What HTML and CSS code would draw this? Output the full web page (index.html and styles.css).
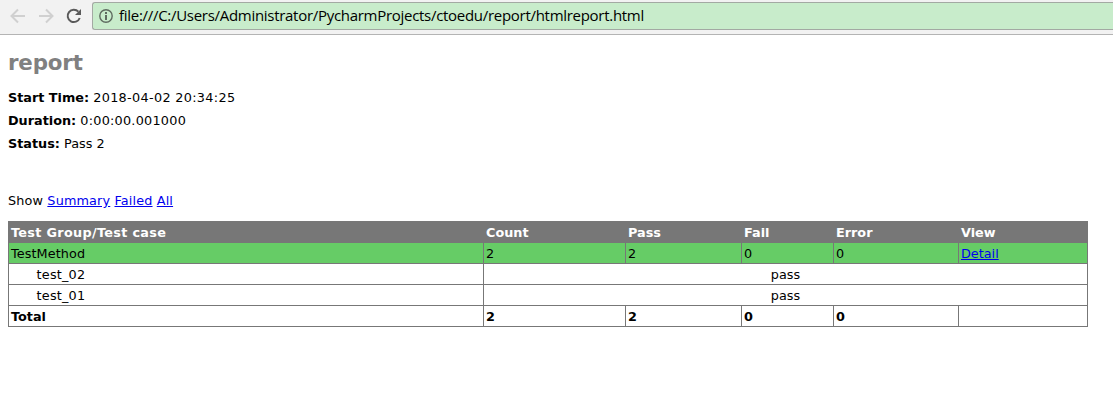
FILE: index.html
```html
<!DOCTYPE html>
<html lang="en">
<head>
<meta charset="utf-8">
<title>report</title>
<link rel="stylesheet" href="styles.css">
</head>
<body>
<div class="toolbar">
  <svg class="nav" viewBox="0 0 16 16"><path d="M15 8H2M8 1.500L1.500 8L8 14.500" fill="none" stroke="#d0d0d0" stroke-width="2"/></svg>
  <svg class="nav" viewBox="0 0 16 16"><path d="M1 8H14M8 1.500L14.500 8L8 14.500" fill="none" stroke="#d0d0d0" stroke-width="2"/></svg>
  <svg class="nav" viewBox="0 0 16 16"><path d="M13.700 10A6.200 6.200 0 1 1 12.400 3.600" fill="none" stroke="#5a5a5a" stroke-width="2"/><path d="M15 1V7H9Z" fill="#5a5a5a"/></svg>
  <div class="address">
    <svg class="info" viewBox="0 0 14 14"><circle cx="7" cy="7" r="6.200" fill="none" stroke="#5f6b60" stroke-width="1.400"/><path d="M6 3h2v2H6zM6 6h2v5H6z" fill="#5f6b60"/></svg>
    <span class="url">file:///C:/Users/Administrator/PycharmProjects/ctoedu/report/htmlreport.html</span>
  </div>
</div>
<main class="page">
  <h1>report</h1>
  <p class="attribute"><strong>Start Time:</strong> <span class="time">2018-04-02 20:34:25</span></p>
  <p class="attribute"><strong>Duration:</strong> <span class="duration">0:00:00.001000</span></p>
  <p class="attribute"><strong>Status:</strong> <span>Pass 2</span></p>
  <p class="show">Show <a href="#">Summary</a> <a href="#">Failed</a> <a href="#">All</a></p>
  <table class="results">
    <colgroup><col class="c-name"><col class="c-count"><col class="c-pass"><col class="c-fail"><col class="c-error"><col class="c-view"></colgroup>
    <tr class="header"><td class="group">Test Group/Test case</td><td>Count</td><td>Pass</td><td>Fail</td><td>Error</td><td>View</td></tr>
    <tr class="passed"><td class="method">TestMethod</td><td>2</td><td>2</td><td>0</td><td>0</td><td><a href="#">Detail</a></td></tr>
    <tr><td><div class="testcase">test_02</div></td><td colspan="5" class="outcome">pass</td></tr>
    <tr><td><div class="testcase">test_01</div></td><td colspan="5" class="outcome">pass</td></tr>
    <tr class="total"><td>Total</td><td>2</td><td>2</td><td>0</td><td>0</td><td></td></tr>
  </table>
</main>
</body>
</html>
```
FILE: styles.css
```css
body {
  margin: 0;
  background: #fff;
  color: #000;
  font-family: Verdana, "DejaVu Sans", sans-serif;
  font-size: 12.8px;
}
.toolbar {
  display: flex;
  align-items: flex-start;
  gap: 12px;
  box-sizing: border-box;
  height: 35px;
  padding: 2px 0 0 10px;
  background: #f2f2f2;
  border-bottom: 1px solid #b4b4b4;
  overflow: hidden;
}
.nav {
  flex: none;
  width: 16px;
  height: 16px;
  margin-top: 6px;
}
.address {
  flex: 1;
  display: flex;
  align-items: center;
  gap: 6px;
  box-sizing: border-box;
  height: 28px;
  margin-left: -2px;
  padding-left: 6px;
  background: #c8eccb;
  border: 1px solid #a3a9a3;
  border-right: 0;
  border-radius: 3px 0 0 3px;
}
.info {
  flex: none;
  width: 14px;
  height: 14px;
}
.url {
  padding-bottom: 2px;
  font: 15px/24px "Open Sans", sans-serif;
  letter-spacing: -0.29px;
  white-space: nowrap;
}
.page {
  padding: 15px 8px 0;
}
h1 {
  margin: 0 0 14px;
  color: gray;
  font-size: 21.33px;
  line-height: 26px;
  letter-spacing: -0.15px;
}
.attribute {
  margin: 0 0 7px;
  line-height: 16px;
}
.time {
  letter-spacing: 0.33px;
}
.duration {
  letter-spacing: 0.25px;
}
.show {
  margin: 41px 0 12px;
  line-height: 16px;
  letter-spacing: 0.15px;
}
a {
  color: #00e;
}
.results {
  width: 1080px;
  table-layout: fixed;
  border-collapse: collapse;
  border: 1px solid #777;
  font-size: 12.8px;
  line-height: 16px;
}
.results td {
  height: 16px;
  padding: 3px 2px 1px;
  border: 1px solid #777;
}
.c-name { width: 475px; }
.c-count { width: 142px; }
.c-pass { width: 116px; }
.c-fail { width: 92px; }
.c-error { width: 125px; }
.c-view { width: 129px; }
.header {
  color: #fff;
  background: #777;
  font-weight: bold;
}
.group {
  letter-spacing: 0.32px;
}
.passed {
  background: #6c6;
}
.method {
  letter-spacing: 0.1px;
}
.testcase {
  margin-left: 25.6px;
  letter-spacing: 0.2px;
}
.results .outcome {
  text-align: center;
}
.total {
  font-weight: bold;
}
```
